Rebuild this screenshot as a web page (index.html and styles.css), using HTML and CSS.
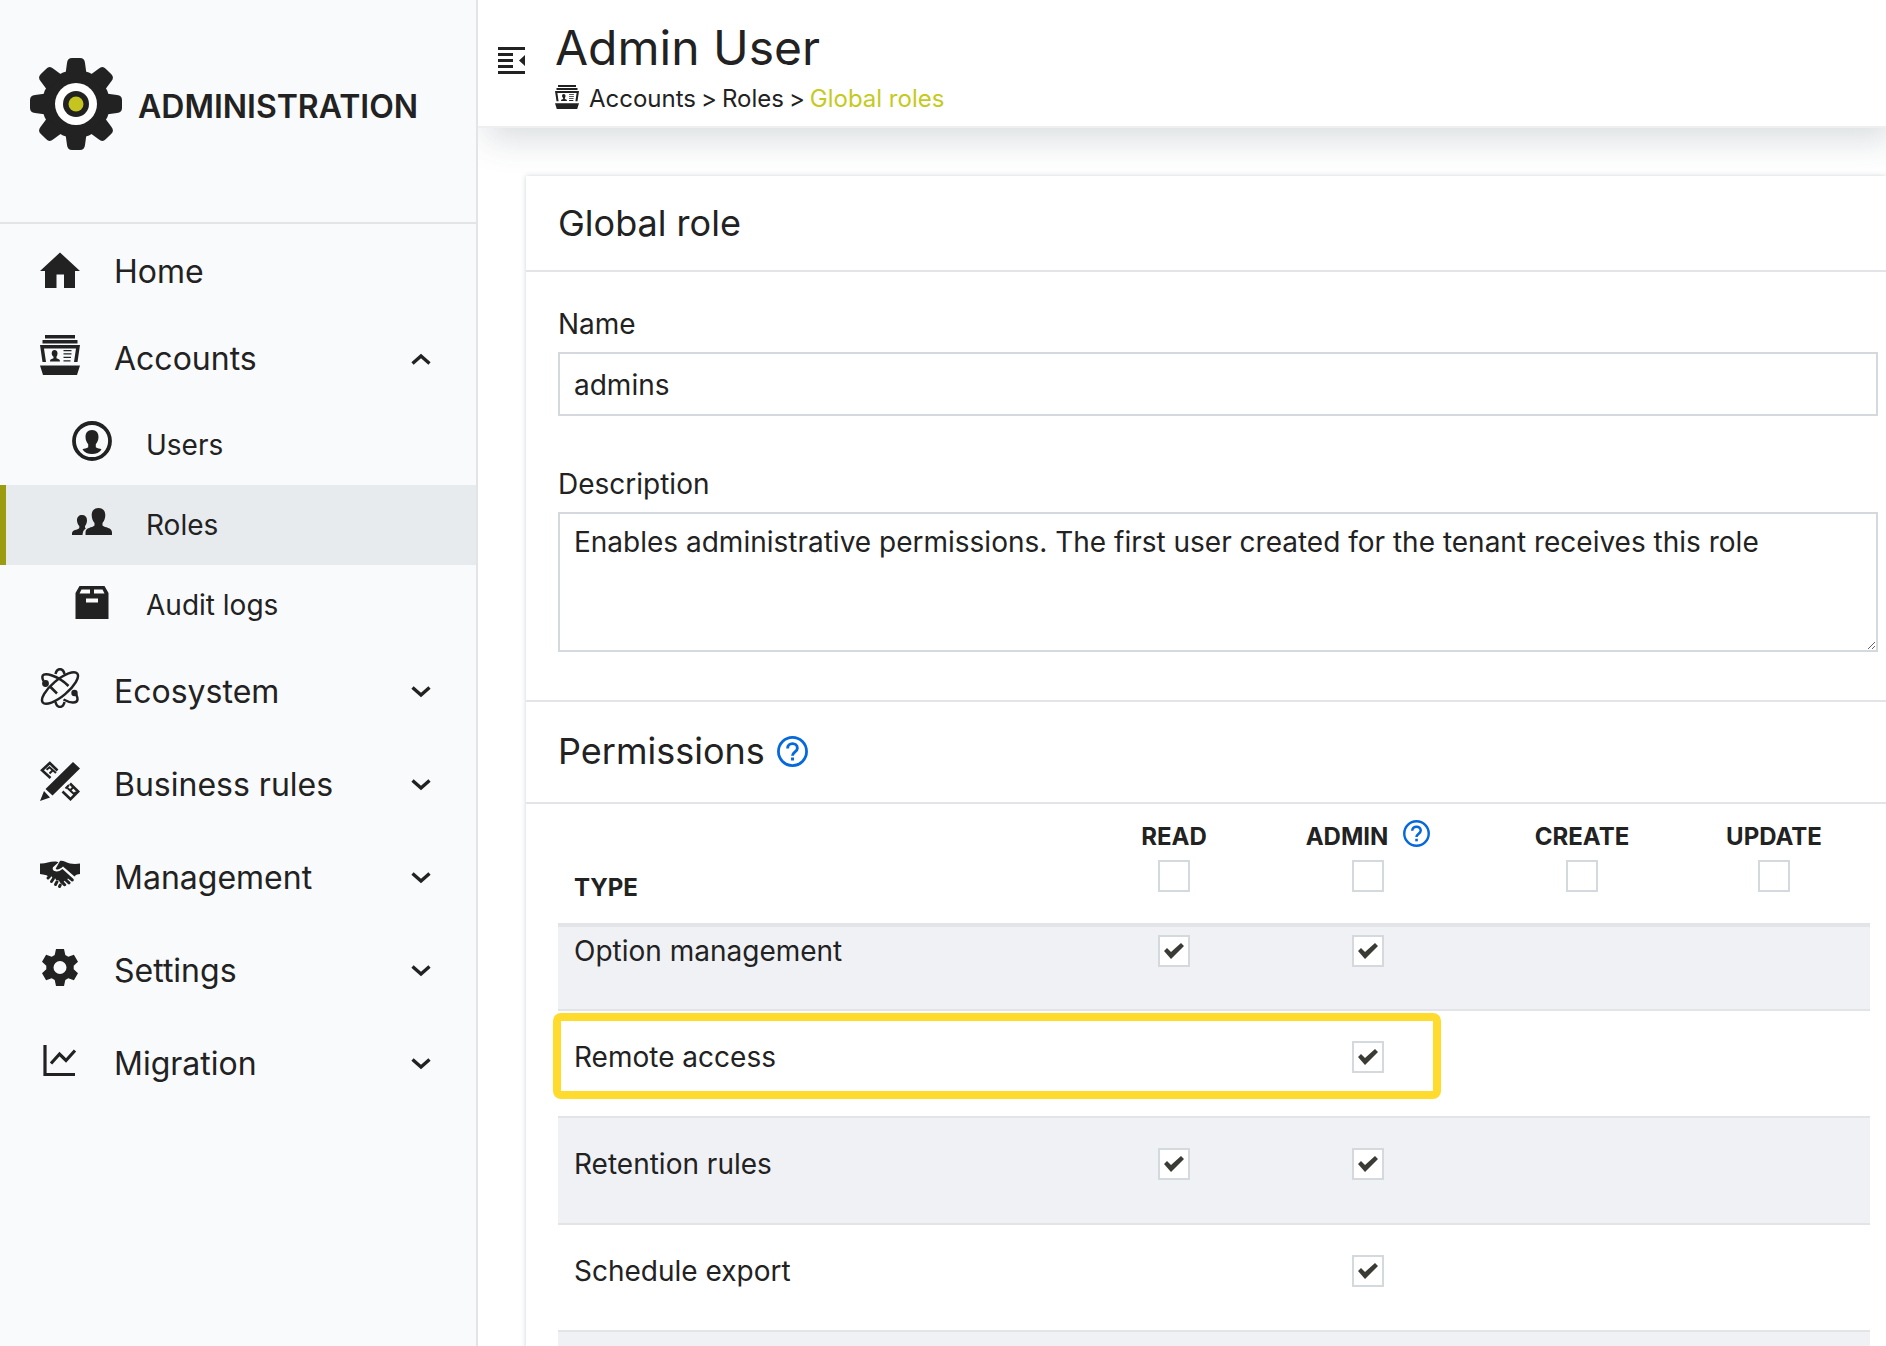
FILE: index.html
```html
<!DOCTYPE html>
<html lang="en">
<head>
<meta charset="utf-8">
<title>Admin User - Global roles</title>
<link rel="stylesheet" href="styles.css">
</head>
<body>
<svg class="sprite" aria-hidden="true">
  <symbol id="i-chevron" viewBox="0 0 20 12"><path d="M1.500 1.500 10 9 18.500 1.500" fill="none" stroke="currentColor" stroke-width="3.400"/></symbol>
  <symbol id="i-cards" viewBox="0 0 40 40">
    <path d="M5 0h30v3.500H5zM2.500 5h35v3.500h-35zM0 10h40l-2.500 17h-3.500l2-13.500H4L6 27H2.500zM0 30.500h40L37 40H3z"/>
    <path d="M14.500 15c2 0 3 1.500 3 3.500 0 1.500-.6 2.500-1 3.200v1.500c1.500.6 3.500.8 3.500 3.300H10c0-2.500 2-2.700 3.500-3.300v-1.500c-1.200-1-1.800-2-1.800-3.200 0-2 1-3.500 2.800-3.500zM23.500 15h8v1.300h-8zm0 3.300h8v1.300h-8zm0 3.500h7.500v1.300h-7.500zm0 3.400h7v1.300h-7z"/>
  </symbol>
  <symbol id="i-help" viewBox="0 0 30 30"><circle cx="15" cy="15" r="13.600" fill="none" stroke="currentColor" stroke-width="2.700"/><path d="M10.300 12c0-2.900 2.100-4.600 4.700-4.600s4.700 1.700 4.700 4.400c0 3.400-4.700 3.600-4.700 7.200" fill="none" stroke="currentColor" stroke-width="2.800"/><path d="M13.600 20.800h2.900v2.900h-2.900z"/></symbol>
</svg>
<div class="app">
  <aside class="sidebar">
    <div class="brand">
      <svg class="brand-logo" viewBox="-46 -46 92 92" aria-hidden="true">
        <defs><path id="tooth" d="M-10.500-30-9-41q.5-5 5-5h8q4.500 0 5 5L10.500-30z"/></defs>
        <g fill="#222">
          <circle r="34"/>
          <use href="#tooth"/><use href="#tooth" transform="rotate(45)"/><use href="#tooth" transform="rotate(90)"/><use href="#tooth" transform="rotate(135)"/><use href="#tooth" transform="rotate(180)"/><use href="#tooth" transform="rotate(225)"/><use href="#tooth" transform="rotate(270)"/><use href="#tooth" transform="rotate(315)"/>
        </g>
        <circle r="21" fill="#fff"/><circle r="13" fill="#222"/><circle r="7.500" fill="#c6c41f"/>
      </svg>
      <span class="brand-name">ADMINISTRATION</span>
    </div>
    <nav class="nav" aria-label="Main">
      <a class="nav-item nav-home" href="#home">
        <svg class="icon" viewBox="0 0 40 40"><path d="M20 4.500 40 23h-5v18H24V26.500h-7.500V41H5V23H0z"/></svg>
        <span>Home</span>
      </a>
      <button class="nav-item" type="button" aria-expanded="true">
        <svg class="icon"><use href="#i-cards"/></svg>
        <span>Accounts</span>
        <svg class="chevron chevron-up"><use href="#i-chevron"/></svg>
      </button>
      <div class="subnav">
        <a class="subnav-item" href="#users">
          <svg class="icon" viewBox="0 0 40 40"><circle cx="20" cy="20" r="18" fill="none" stroke="currentColor" stroke-width="3.800"/><path d="M20 9c4.500 0 6.500 3 6.500 7 0 3-1.200 5.500-2.700 7.300v2.900c1.500 1.300 4.200 1 5.700 2.300C27.500 31.500 24 33 20 33s-7.500-1.500-9.500-4.500c1.500-1.300 4.200-1 5.700-2.300v-2.900C14.700 21.500 13.500 19 13.500 16c0-4 2-7 6.500-7z"/></svg>
          <span>Users</span>
        </a>
        <a class="subnav-item is-active" href="#roles" aria-current="page">
          <svg class="icon" viewBox="0 0 40 40"><path d="M26.500 7c4.500 0 6.800 3 6.800 7.300 0 3.200-1.300 5.900-2.800 7.700v2.500c2.500 2.500 9.500 1.500 9.500 7V34H13.500v-2.500c0-5.500 6.700-4.500 9-7V22c-1.500-1.800-2.800-4.500-2.800-7.700C19.700 10 22 7 26.500 7zM10 14c3.200 0 5 2 5 5.200 0 2.500-.8 4.500-2 5.800v1.500l.8 1C11.500 28.800 10.800 31 10.500 34H0v-1.500C0 28.500 5.800 29.300 7.300 27v-2C6 23.700 5 21.700 5 19.200 5 16 7 14 10 14z"/></svg>
          <span>Roles</span>
        </a>
        <a class="subnav-item" href="#audit-logs">
          <svg class="icon" viewBox="0 0 40 40"><path fill-rule="evenodd" d="M7.500 5h25L36.500 12v26h-33V12zM9.500 8.500 7.500 12.500h10.500v-4zM22 8.500v4h10.500l-2-4zM14 17.500h12v4H14z"/></svg>
          <span>Audit logs</span>
        </a>
      </div>
      <button class="nav-item" type="button" aria-expanded="false">
        <svg class="icon" viewBox="0 0 40 40"><g fill="none" stroke="currentColor" stroke-width="2.500"><ellipse cx="20" cy="20" rx="22.500" ry="8" transform="rotate(-40 20 20)"/><path d="M3.500 13C0 6 5 5 12 7.500c6 2 12 6 16.500 10.500M10.500 19l6.500 6.500M23.500 31.500c6.500 3.500 13.500 4.500 14 0 .2-2.500-1-4-2-6.500"/><path d="M15.500 6C17-.5 23-.5 24.500 6M15.500 34c1.500 6.500 7.500 6.500 9 0"/></g><circle cx="5.500" cy="15.500" r="3.400"/><circle cx="34.500" cy="25" r="3.200"/></svg>
        <span>Ecosystem</span>
        <svg class="chevron"><use href="#i-chevron"/></svg>
      </button>
      <button class="nav-item" type="button" aria-expanded="false">
        <svg class="icon" viewBox="0 0 40 40"><path d="M33 1 40 7.500 12.500 34.500 5.500 28zM4 30l6 6.500L0 40z"/><g fill="none" stroke="currentColor" stroke-width="2.600"><path d="M10.500 17 2 9.300 9.800 2 17.500 9.500"/><path d="m6.500 8.800 3-2.500 6.500 5.700M9.500 12.500l3-3" stroke-width="2"/><path d="m22.500 30.500 8 7.700 7.700-7.700-8.200-8"/><path d="m25.500 27.500 3.500-3.500M27.500 27l6.500 6 2-2M30.500 29l3-3" stroke-width="2"/></g></svg>
        <span>Business rules</span>
        <svg class="chevron"><use href="#i-chevron"/></svg>
      </button>
      <button class="nav-item" type="button" aria-expanded="false">
        <svg class="icon" viewBox="0 0 40 40"><path d="M0 9.500c5 .6 10-2.500 16-2l2.500.8-5.500 5c-1 2 .5 4.200 3.500 4.200 2.500 0 4.500-1.500 6-2.500l11 10c1 1.500-.5 3-2 2.300l-3.500-2.800-.7.800 3.200 3c.5 1.700-1.300 2.700-2.500 1.800l-3.500-3.300-.8.800 2.600 3c0 1.700-1.800 2.200-2.800 1.200L20 28.500c-1-3-3-2.500-4-2.500-.5-2-2-2.500-3.500-2-.5-2-2.500-2.500-4-1C7.500 21 4 20.500 0 20z"/><path d="M20 7c2.500-1 6 1.500 10 2.500 3 .6 7 .6 10 0V20c-2 .2-4 .6-5.500 2.500L23 12.500c-2 1.700-4 3.200-6 3-1 0-1.500-.8-1-1.500z"/><g stroke="currentColor" stroke-width="3" stroke-linecap="round"><path d="m8 24 1.500-1.500M11.500 27.500l2-3M15.500 30.500l1.500-2.700M19.500 32.500l.8-1.500"/></g></svg>
        <span>Management</span>
        <svg class="chevron"><use href="#i-chevron"/></svg>
      </button>
      <button class="nav-item" type="button" aria-expanded="false">
        <svg class="icon" viewBox="0 0 40 40"><path fill-rule="evenodd" d="M16 2h8l1.300 6 3 1.700 5.600-2 4.100 7-4.300 4v3.600l4.300 4-4.100 7-5.600-2-3 1.700-1.300 6h-8l-1.300-6-3-1.700-5.600 2-4.100-7 4.300-4v-3.600l-4.300-4 4.100-7 5.600 2 3-1.700zM20 14a6.500 6.500 0 1 0 0 13 6.500 6.500 0 0 0 0-13z"/></svg>
        <span>Settings</span>
        <svg class="chevron"><use href="#i-chevron"/></svg>
      </button>
      <button class="nav-item" type="button" aria-expanded="false">
        <svg class="icon" viewBox="0 0 40 40"><path d="M5 5v29.500h30M11 23.500l8.500-9.500 6.500 6.500 9-10" fill="none" stroke="currentColor" stroke-width="3.200"/></svg>
        <span>Migration</span>
        <svg class="chevron"><use href="#i-chevron"/></svg>
      </button>
    </nav>
  </aside>

  <div class="main">
    <header class="topbar">
      <button class="menu-toggle" type="button" aria-label="Collapse navigation">
        <svg viewBox="0 0 27 27"><path d="M0 0h27v3H0zM0 6h15v3H0zM0 12h15v3H0zM0 18h15v3H0zM0 24h27v3H0zM27 8v11l-6-5.500z"/></svg>
      </button>
      <div class="heading">
        <h1>Admin User</h1>
        <nav class="breadcrumb" aria-label="Breadcrumb">
          <svg class="crumb-icon"><use href="#i-cards"/></svg>
          <a href="#accounts">Accounts</a><span>&gt;</span><a href="#roles">Roles</a><span>&gt;</span><a class="current" href="#global-roles" aria-current="page">Global roles</a>
        </nav>
      </div>
    </header>

    <main class="content">
      <section class="card">
        <h2 class="card-title">Global role</h2>
        <form class="form">
          <div class="field">
            <label for="role-name">Name</label>
            <input id="role-name" type="text" value="admins">
          </div>
          <div class="field">
            <label for="role-description">Description</label>
            <textarea id="role-description">Enables administrative permissions. The first user created for the tenant receives this role</textarea>
          </div>
        </form>
        <h2 class="card-title permissions-title">Permissions
          <button class="help" type="button" aria-label="Help on permissions"><svg><use href="#i-help"/></svg></button>
        </h2>
        <table class="permissions">
          <colgroup><col><col class="col-read"><col class="col-admin"><col class="col-std"><col class="col-std"></colgroup>
          <thead>
            <tr>
              <th class="type" scope="col">TYPE</th>
              <th scope="col"><label for="all-read">READ</label><input id="all-read" type="checkbox"></th>
              <th scope="col"><div class="with-help"><label for="all-admin">ADMIN</label><button class="help help-small" type="button" aria-label="Help on admin level"><svg><use href="#i-help"/></svg></button></div><input id="all-admin" type="checkbox"></th>
              <th scope="col"><label for="all-create">CREATE</label><input id="all-create" type="checkbox"></th>
              <th scope="col"><label for="all-update">UPDATE</label><input id="all-update" type="checkbox"></th>
            </tr>
          </thead>
          <tbody>
            <tr class="first">
              <th scope="row">Option management</th>
              <td><input type="checkbox" checked aria-label="Option management: read"></td>
              <td><input type="checkbox" checked aria-label="Option management: admin"></td>
              <td></td><td></td>
            </tr>
            <tr class="highlighted">
              <th scope="row">Remote access<span class="marker"></span></th>
              <td></td>
              <td><input type="checkbox" checked aria-label="Remote access: admin"></td>
              <td></td><td></td>
            </tr>
            <tr>
              <th scope="row">Retention rules</th>
              <td><input type="checkbox" checked aria-label="Retention rules: read"></td>
              <td><input type="checkbox" checked aria-label="Retention rules: admin"></td>
              <td></td><td></td>
            </tr>
            <tr>
              <th scope="row">Schedule export</th>
              <td></td>
              <td><input type="checkbox" checked aria-label="Schedule export: admin"></td>
              <td></td><td></td>
            </tr>
            <tr><td></td><td></td><td></td><td></td><td></td></tr>
          </tbody>
        </table>
      </section>
    </main>
  </div>
</div>
</body>
</html>
```
FILE: styles.css
```css
:root {
  --ink: #222;
  --line: #e3e4e8;
  --field-line: #d4d9dd;
  --accent: #c5ca1d;
  --blue: #0568dc;
}

* { box-sizing: border-box; }

body {
  margin: 0;
  font-family: Inter, "Liberation Sans", sans-serif;
  font-size: 28px;
  line-height: 40px;
  color: var(--ink);
  background: #fff;
}

button, input, textarea { font: inherit; color: inherit; }
button { padding: 0; border: 0; background: none; text-align: left; cursor: pointer; }
a { color: inherit; text-decoration: none; }
svg { fill: currentColor; display: block; }
.sprite { display: none; }
h1, h2 { margin: 0; font-weight: 400; }

.app { display: flex; height: 100vh; overflow: hidden; }

/* Sidebar */
.sidebar {
  flex: 0 0 478px;
  background: #f9fafc;
  border-right: 2px solid var(--line);
}
.brand {
  display: flex;
  align-items: center;
  gap: 16px;
  height: 224px;
  padding: 0 30px 14px;
  border-bottom: 2px solid var(--line);
}
.brand-logo { width: 92px; height: 92px; }
.brand-name { font-size: 32px; font-weight: 600; padding-top: 6px; }

.nav { padding-top: 8px; }
.nav-item, .subnav-item { display: flex; align-items: center; gap: 34px; width: 100%; }
.nav-item { height: 93px; padding: 0 45px 0 40px; font-size: 32px; }
.nav-home { height: 80px; }
.subnav-item { height: 80px; padding-left: 72px; }
.subnav-item.is-active { background: #e7ebee; box-shadow: inset 6px 0 #9b9c10; }
.icon { width: 40px; height: 40px; margin-bottom: 8px; flex: none; }
.chevron { width: 20px; height: 12px; margin-left: auto; }
.chevron-up { transform: rotate(180deg); }

/* Top bar */
.main { flex: 1; min-width: 0; display: flex; flex-direction: column; overflow: hidden; }
.topbar {
  display: flex;
  gap: 30px;
  flex: none;
  height: 128px;
  padding: 16px 20px 0;
  border-bottom: 2px solid #eeeff1;
  box-shadow: 8px 12px 32px rgba(50, 70, 85, .18);
}
.menu-toggle { width: 27px; height: 27px; margin-top: 31px; }
h1 { font-size: 48px; line-height: 64px; }
.breadcrumb { display: flex; align-items: center; gap: 5px; font-size: 24px; line-height: 38px; }
.crumb-icon { width: 24px; height: 24px; margin: 0 5px 4px 0; }
.current { color: var(--accent); }

/* Card */
.content { padding: 48px 0 0 48px; }
.card { background: #fff; box-shadow: 0 0 5px rgba(50, 60, 80, .22); }
.card-title {
  display: flex;
  align-items: center;
  height: 96px;
  padding: 0 32px;
  font-size: 36px;
  border-bottom: 2px solid var(--line);
}
.permissions-title { height: 104px; gap: 12px; padding-bottom: 2px; border-top: 2px solid var(--line); }
.form { display: grid; gap: 48px; padding: 32px 8px 48px 32px; }
.field { display: grid; gap: 8px; }
.field input, .field textarea {
  display: block;
  width: 100%;
  border: 2px solid var(--field-line);
  border-radius: 0;
  background: #fff;
  outline: 0;
}
.field input { height: 64px; padding: 2px 14px 0; }
.field textarea { height: 140px; padding: 8px 14px; resize: vertical; }

.help { color: var(--blue); }
.help svg { width: 31px; height: 31px; }
.help-small svg { width: 27px; height: 27px; }

/* Permissions table */
.permissions {
  width: calc(100% - 48px);
  margin-left: 32px;
  table-layout: fixed;
  border-collapse: separate;
  border-spacing: 0;
}
.col-read { width: 152px; }
.col-admin { width: 236px; }
.col-std { width: 192px; }
.permissions th, .permissions td { padding: 0; text-align: center; vertical-align: top; }
.permissions thead th {
  height: 121px;
  padding-top: 16px;
  font-size: 24px;
  line-height: 34px;
  border-bottom: 2px solid var(--line);
}
.permissions thead label { display: block; }
.permissions thead input { margin-top: 6px; }
.permissions thead .type { padding: 67px 0 0 16px; text-align: left; }
.with-help { display: flex; justify-content: center; gap: 15px; height: 34px; }
.help-small { height: 27px; }
.permissions tbody th, .permissions tbody td { height: 107px; padding-top: 30px; border-top: 2px solid var(--line); }
.permissions tbody th { padding-left: 16px; text-align: left; font-weight: 400; line-height: 32px; }
.permissions tbody tr:nth-child(odd) { background: #eff1f4; }
.permissions tbody .first th, .permissions tbody .first td { height: 84px; padding-top: 8px; }

.permissions input {
  appearance: none;
  display: block;
  width: 32px;
  height: 32px;
  margin: 0 auto;
  padding: 6px 4px;
  border: 2px solid var(--field-line);
  background: #fff;
}
.permissions input:checked::before {
  content: "";
  display: block;
  width: 20px;
  height: 16px;
  background: #3b3b36;
  clip-path: polygon(0 8px, 3px 5px, 7px 9px, 17px 0, 20px 3px, 7px 16px);
}

/* Marker drawn over the highlighted row */
.highlighted { position: relative; }
.marker {
  position: absolute;
  inset: 4px 429px 17px -5px;
  border: 8px solid #ffdb2d;
  border-radius: 8px;
  pointer-events: none;
}
```
